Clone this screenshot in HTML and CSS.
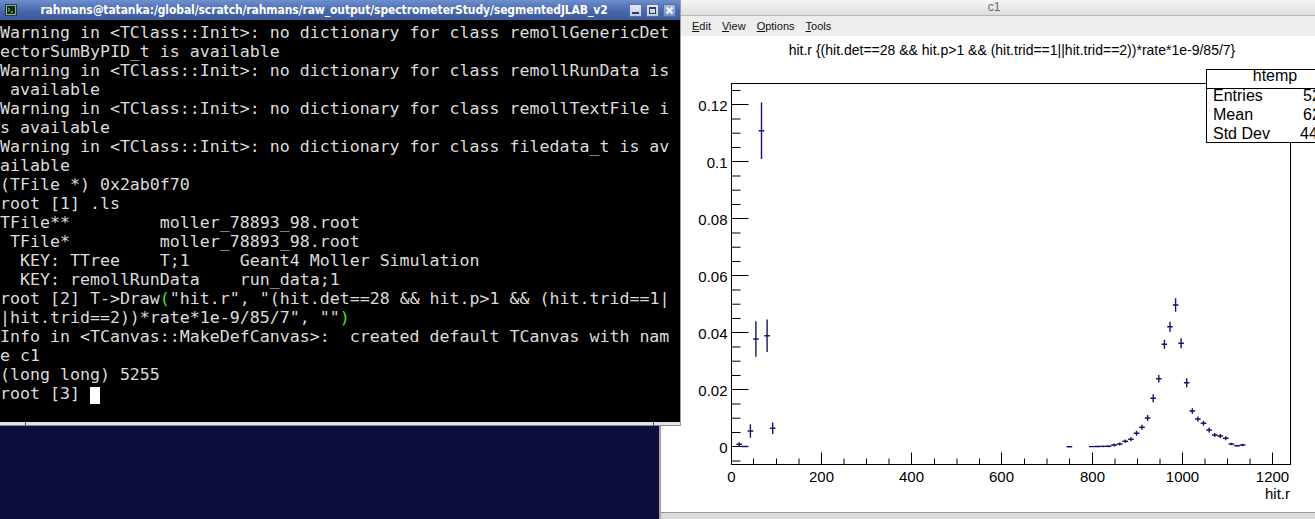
FILE: index.html
```html
<!DOCTYPE html>
<html>
<head>
<meta charset="utf-8">
<title>Desktop</title>
<link rel="stylesheet" href="styles.css">
</head>
<body>
<div class="desktop">

  <div class="win-c1">
    <div class="c1-title">c1</div>
    <div class="c1-menu">
      <span class="mi"><u>E</u>dit</span>
      <span class="mi"><u>V</u>iew</span>
      <span class="mi"><u>O</u>ptions</span>
      <span class="mi"><u>T</u>ools</span>
    </div>
    <div class="c1-canvas">
      <svg class="plot" width="654" height="476" viewBox="661 36 654 476" xmlns="http://www.w3.org/2000/svg">
        <text class="ptitle" x="1012" y="55" text-anchor="middle">hit.r {(hit.det==28 &amp;&amp; hit.p&gt;1 &amp;&amp; (hit.trid==1||hit.trid==2))*rate*1e-9/85/7}</text>
        <rect x="731.5" y="83.5" width="559" height="381" fill="none" stroke="#000" stroke-width="1"/>
        <path stroke="#000" stroke-width="1" fill="none" d="M731.5 446.5h17M731.5 389.5h17M731.5 332.5h17M731.5 275.5h17M731.5 218.5h17M731.5 161.5h17M731.5 104.5h17
          M731.5 461h9M731.5 432.5h9M731.5 418.2h9M731.5 404h9M731.5 375.5h9M731.5 361.2h9M731.5 347h9M731.5 318.5h9M731.5 304.2h9M731.5 290h9M731.5 261.5h9M731.5 247.2h9M731.5 233h9M731.5 204.5h9M731.5 190.2h9M731.5 176h9M731.5 147.5h9M731.5 133.2h9M731.5 119h9M731.5 90.5h9
          M821.5 464.5v-12M911.5 464.5v-12M1001.5 464.5v-12M1092.5 464.5v-12M1182.5 464.5v-12M1272.5 464.5v-12
          M753.5 464.5v-6M776.5 464.5v-6M799 464.5v-6M844 464.5v-6M866.5 464.5v-6M889 464.5v-6M934.5 464.5v-6M957 464.5v-6M979.5 464.5v-6M1024.5 464.5v-6M1047 464.5v-6M1069.5 464.5v-6M1115 464.5v-6M1137.5 464.5v-6M1160 464.5v-6M1205 464.5v-6M1227.5 464.5v-6M1250 464.5v-6"/>
        <g class="ylab">
          <text x="727.5" y="111">0.12</text>
          <text x="727.5" y="167.5">0.1</text>
          <text x="727.5" y="224.5">0.08</text>
          <text x="727.5" y="281.5">0.06</text>
          <text x="727.5" y="338.5">0.04</text>
          <text x="727.5" y="395.5">0.02</text>
          <text x="727.5" y="452.5">0</text>
        </g>
        <g class="xlab">
          <text x="731.5" y="482">0</text>
          <text x="821.5" y="482">200</text>
          <text x="911.5" y="482">400</text>
          <text x="1001.5" y="482">600</text>
          <text x="1092.5" y="482">800</text>
          <text x="1182.5" y="482">1000</text>
          <text x="1272.5" y="482">1200</text>
        </g>
        <text class="xtitle" x="1290" y="499">hit.r</text>
        <path class="pts" d="M736.4 444.3h5.6M739.2 442.3v4
          M742 446.5h5.6M744.8 445.7v1.6
          M747.6 431h5.6M750.4 424.3v13.4
          M753.1 339h5.6M755.9 321.2v35.6
          M758.7 130.7h5.6M761.5 102.4v56.6
          M764.3 335.7h5.6M767.1 319.5v32.4
          M769.9 428.3h5.6M772.7 422.5v11.6
          M1066.6 446.7h5.6
          M1089 446.6h5.6
          M1094.6 446.5h5.6M1097.4 445.7v1.6
          M1100.2 446.4h5.6M1103 445.6v1.6
          M1105.7 446.2h5.6M1108.5 445.2v2
          M1111.3 445h5.6M1114.1 443.5v3
          M1116.9 444h5.6M1119.7 442.5v3
          M1122.5 441.3h5.6M1125.3 439.5v3.6
          M1128.1 439.3h5.6M1130.9 437.3v4
          M1133.7 433.3h5.6M1136.5 430.8v5
          M1139.2 427.3h5.6M1142 424.8v5
          M1144.8 418h5.6M1147.6 415v6
          M1150.4 398.3h5.6M1153.2 394.3v8
          M1156 378.7h5.6M1158.8 374.9v7.6
          M1161.6 344.3h5.6M1164.4 339.8v9
          M1167.2 326.7h5.6M1170 321.7v10
          M1172.8 305h5.6M1175.6 298.3v13.4
          M1178.3 343.3h5.6M1181.1 338.3v10
          M1183.9 382.7h5.6M1186.7 378.2v9
          M1189.5 411h5.6M1192.3 408.2v5.6
          M1195.1 419h5.6M1197.9 416.5v5
          M1200.7 423.3h5.6M1203.5 420.8v5
          M1206.3 430h5.6M1209.1 427.5v5
          M1211.9 435h5.6M1214.7 433v4
          M1217.4 436h5.6M1220.2 434v4
          M1223 438.3h5.6M1225.8 436.3v4
          M1228.6 444h5.6M1231.4 442.8v2.4
          M1234.2 445.7h5.6M1237 444.7v2
          M1239.8 445h5.6M1242.6 443.8v2.4"/>
        <g class="stats">
          <rect x="1206.5" y="69.5" width="140" height="73" fill="#fff" stroke="#000" stroke-width="1"/>
          <path d="M1206.5 88.5h140" stroke="#000" stroke-width="1"/>
          <text x="1275" y="81" text-anchor="middle">htemp</text>
          <text x="1213" y="101">Entries</text>
          <text x="1213" y="120">Mean</text>
          <text x="1213" y="139">Std Dev</text>
          <text x="1303" y="101">5255</text>
          <text x="1303" y="120">622.4</text>
          <text x="1300" y="139">441.8</text>
        </g>
      </svg>
    </div>
    <div class="c1-bottom"></div>
  </div>

  <div class="win-term">
    <div class="term-title">
      <svg class="term-icon" width="12" height="12" viewBox="0 0 12 12" xmlns="http://www.w3.org/2000/svg">
        <rect x="0.5" y="0.5" width="11" height="11" fill="#9aa7a0" stroke="#2a3a30"/>
        <rect x="2" y="2" width="8" height="8" fill="#0f2a16"/>
        <path d="M3 4l2 1.5-2 1.5M5.5 8h2.5" stroke="#7fd07f" stroke-width="1" fill="none"/>
      </svg>
      <span class="term-title-text">rahmans@tatanka:/global/scratch/rahmans/raw_output/spectrometerStudy/segmentedJLAB_v2</span>
      <div class="wbtns">
        <span class="wbtn"><svg width="13" height="13" viewBox="0 0 13 13"><rect x="3" y="8" width="7" height="2" fill="#2b3d66"/></svg></span>
        <span class="wbtn"><svg width="13" height="13" viewBox="0 0 13 13"><rect x="3.5" y="3.5" width="6" height="6" fill="none" stroke="#2b3d66"/><rect x="3" y="3" width="7" height="2" fill="#2b3d66"/></svg></span>
        <span class="wbtn wclose"><svg width="13" height="13" viewBox="0 0 13 13"><path d="M3.5 3.5l6 6M9.5 3.5l-6 6" stroke="#fff" stroke-width="2"/></svg></span>
      </div>
    </div>
    <div class="term-body">Warning in &lt;TClass::Init&gt;: no dictionary for class remollGenericDet
ectorSumByPID_t is available
Warning in &lt;TClass::Init&gt;: no dictionary for class remollRunData is
 available
Warning in &lt;TClass::Init&gt;: no dictionary for class remollTextFile i
s available
Warning in &lt;TClass::Init&gt;: no dictionary for class filedata_t is av
ailable
(TFile *) 0x2ab0f70
root [1] .ls
TFile**         moller_78893_98.root
 TFile*         moller_78893_98.root
  KEY: TTree    T;1     Geant4 Moller Simulation
  KEY: remollRunData    run_data;1
root [2] T-&gt;Draw<span class="hl">(</span>"hit.r", "(hit.det==28 &amp;&amp; hit.p&gt;1 &amp;&amp; (hit.trid==1|
|hit.trid==2))*rate*1e-9/85/7", ""<span class="hl">)</span>
Info in &lt;TCanvas::MakeDefCanvas&gt;:  created default TCanvas with nam
e c1
(long long) 5255
root [3] <span class="cursor"> </span></div>
    <div class="term-bottom"><span class="grip grip-l"></span><span class="grip grip-r"></span></div>
  </div>

</div>
</body>
</html>
```

FILE: styles.css
```css
html, body {
  margin: 0;
  padding: 0;
}
body {
  width: 1315px;
  height: 519px;
  overflow: hidden;
  background: #0e0e3e;
}
.desktop {
  position: relative;
  width: 1315px;
  height: 519px;
  overflow: hidden;
}

/* ---------- terminal window ---------- */
.win-term {
  position: absolute;
  left: 0;
  top: 0;
  width: 680px;
  height: 426px;
  z-index: 2;
  display: flex;
  flex-direction: column;
  background: #000;
  border-right: 1px solid #9c9c9c;
}
.term-title {
  height: 20px;
  flex: none;
  display: flex;
  align-items: center;
  background: linear-gradient(#6d8fd0, #4767a8 55%, #3b5a98);
  padding: 0 4px 0 5px;
}
.term-icon {
  flex: none;
}
.term-title-text {
  flex: 1;
  text-align: center;
  color: #fff;
  font-family: "DejaVu Sans Condensed", "DejaVu Sans", sans-serif;
  font-stretch: condensed;
  font-weight: bold;
  font-size: 12px;
  letter-spacing: -0.1px;
  white-space: nowrap;
  overflow: hidden;
  padding-left: 10px;
  padding-right: 8px;
}
.wbtns {
  display: flex;
  gap: 4px;
  flex: none;
}
.wbtn {
  width: 13px;
  height: 13px;
  background: linear-gradient(#e6ecf7, #b9c6e0);
  box-shadow: inset 0 0 0 1px #5a6f9c;
  display: block;
}
.wbtn svg {
  display: block;
}
.wclose {
  background: linear-gradient(#a9bde6, #6e8ccc);
}
.term-body {
  flex: 1;
  padding-top: 3px;
  color: #dcdcdc;
  font-family: "DejaVu Sans Mono", monospace;
  font-size: 16.6px;
  line-height: 19px;
  white-space: pre;
  overflow: hidden;
}
.hl {
  color: #3ee63e;
}
.cursor {
  display: inline-block;
  width: 10px;
  height: 17px;
  background: #fff;
  vertical-align: -3px;
}
.term-bottom {
  position: relative;
  height: 3px;
  flex: none;
  background: #e4e4e4;
  border-bottom: 1px solid #8a8a8a;
}
.grip {
  position: absolute;
  top: 0;
  width: 1px;
  height: 4px;
  background: #555;
}
.grip-l { left: 25px; }
.grip-r { left: 653px; }

/* ---------- ROOT canvas window ---------- */
.win-c1 {
  position: absolute;
  left: 659px;
  top: 0;
  width: 654px;
  height: 519px;
  border-left: 2px solid #a4a4a4;
  display: flex;
  flex-direction: column;
  background: #ececec;
}
.c1-title {
  height: 15px;
  flex: none;
  border-bottom: 1px solid #b8b8b8;
  background: linear-gradient(#f4f4f4, #dedede);
  color: #6a6a6a;
  font-family: "Liberation Sans", Arial, sans-serif;
  font-size: 12px;
  line-height: 15px;
  text-align: center;
  padding-left: 12px;
}
.c1-menu {
  height: 20px;
  flex: none;
  display: flex;
  align-items: center;
  gap: 11px;
  padding-left: 31px;
  background: #ededed;
  font-family: "Liberation Sans", Arial, sans-serif;
  font-size: 11px;
  color: #111;
}
.c1-canvas {
  flex: 1;
  background: #fff;
  overflow: hidden;
}
.plot {
  display: block;
}
.c1-bottom {
  height: 6px;
  flex: none;
  border-top: 1px solid #9a9a9a;
  background: #dadada;
}

/* plot texts */
.plot text {
  font-family: "Liberation Sans", Arial, sans-serif;
  fill: #000;
}
.ptitle {
  font-size: 14px;
}
.ylab text {
  font-size: 15px;
  text-anchor: end;
}
.xlab text {
  font-size: 15px;
  text-anchor: middle;
}
.xtitle {
  font-size: 15px;
  text-anchor: end;
}
.stats text {
  font-size: 16px;
}
.pts {
  fill: none;
  stroke: #14146e;
  stroke-width: 1.4;
}
```
